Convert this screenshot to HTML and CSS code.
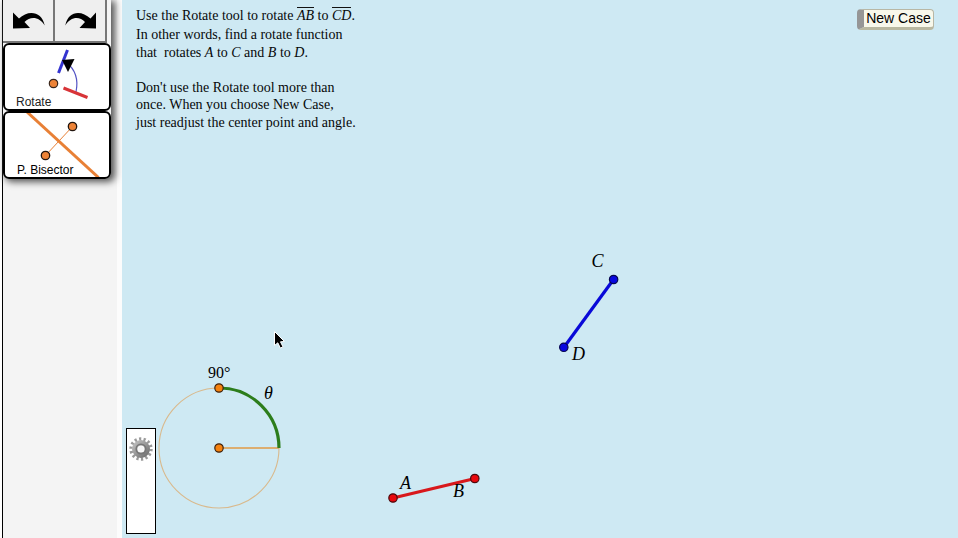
FILE: index.html
```html
<!DOCTYPE html>
<html lang="en">
<head>
<meta charset="utf-8">
<title>Rotate tool</title>
<link rel="stylesheet" href="styles.css">
</head>
<body>
<div class="app">
  <aside class="sidebar">
    <div class="tools">
      <div class="history">
        <button class="history-btn" aria-label="Undo">
          <svg width="50" height="41" viewBox="0 0 50 41"><path d="M10 12.500 L16 18.500 C25 9.500 39 11 41.700 25.500 C37 17.500 28 15.500 21.500 22 L27 28 L10 28.500Z"/></svg>
        </button>
        <button class="history-btn" aria-label="Redo">
          <svg width="50" height="41" viewBox="0 0 50 41"><path d="M41 12.500 L35.500 18.500 C26 9.500 13 11 10.300 25.500 C15 17.500 24 15.500 30 22 L24.500 28 L41 28.500Z"/></svg>
        </button>
      </div>
      <button class="tool">
        <svg class="tool-art" width="104" height="65" viewBox="5 45 104 65">
          <path d="M66 62 Q80 73 76 92" fill="none" stroke="#5656c5" stroke-width="1.200"/>
          <path d="M58.500 73 L67.500 50" stroke="#3434d0" stroke-width="3"/>
          <path d="M63.500 88 L87.500 97.500" stroke="#d83438" stroke-width="3"/>
          <path d="M62 60 L74.500 59 L68 72Z"/>
          <circle cx="53.500" cy="83.500" r="4.200" fill="#ed8337" stroke="#38251a" stroke-width="1.200"/>
        </svg>
        <span class="tool-label">Rotate</span>
      </button>
      <button class="tool tool-bisector">
        <svg class="tool-art" width="104" height="65" viewBox="5 113 104 65">
          <path d="M27 112 L98.500 177.500" stroke="#e88036" stroke-width="3"/>
          <path d="M45.500 155.500 L72.500 126.500" stroke="#e88036" stroke-width="1"/>
          <g fill="#ed8337" stroke="#21150e" stroke-width="1.300"><circle cx="45.500" cy="155.500" r="4.200"/><circle cx="72.500" cy="126.500" r="4.200"/></g>
        </svg>
        <span class="tool-label">P. Bisector</span>
      </button>
    </div>
  </aside>
  <main class="sketch">
    <div class="instructions">
      <p>Use the Rotate tool to rotate <i class="seg">AB</i> to <i class="seg">CD</i>.<br>In other words, find a rotate function<br>that&nbsp; rotates <i>A</i> to <i>C</i> and <i>B</i> to <i>D</i>.</p>
      <p class="second">Don't use the Rotate tool more than<br>once. When you choose New Case,<br>just readjust the center point and angle.</p>
    </div>
    <button class="new-case">New Case</button>
    <svg class="geometry" width="836" height="538" viewBox="122 0 836 538">
      <circle cx="219" cy="448" r="60" fill="none" stroke="#d9b98c" stroke-width="1.100"/>
      <path d="M219 448 H279" stroke="#dcae70" stroke-width="2"/>
      <path d="M219 388 A60 60 0 0 1 279 448" fill="none" stroke="#2c7d1b" stroke-width="3.200"/>
      <g fill="#f5820f" stroke="#3e210b" stroke-width="1.200"><circle cx="219" cy="388" r="4.200"/><circle cx="219" cy="448" r="4.200"/></g>
      <path d="M393 498 L475 478.500" stroke="#d8181c" stroke-width="3.200"/>
      <g fill="#e8080d" stroke="#4b080b" stroke-width="1.200"><circle cx="393" cy="498" r="4.200"/><circle cx="474.800" cy="478.500" r="4.200"/></g>
      <path d="M564 347.300 L613.500 279.500" stroke="#0909d8" stroke-width="3.200"/>
      <g fill="#0808df" stroke="#060650" stroke-width="1.200"><circle cx="563.800" cy="347.300" r="4.200"/><circle cx="613.600" cy="279.500" r="4.200"/></g>
      <text class="measure" x="208" y="378">90°</text>
      <g class="label">
        <text x="264" y="399">θ</text>
        <text x="400" y="488.500">A</text>
        <text x="453" y="497">B</text>
        <text x="591.500" y="267">C</text>
        <text x="572" y="360">D</text>
      </g>
      <path d="M274.500 331.500 L274.500 345.500 L277.800 342.800 L280.300 348 L283 346.900 L280.500 341.800 L284.500 341.500Z" stroke="#fff" stroke-width="1"/>
    </svg>
    <div class="options">
      <svg width="26" height="26" viewBox="-13 -13 26 26">
        <defs><linearGradient id="metal" x1="0" y1="0" x2="1" y2="1"><stop offset="0" stop-color="#bbb"/><stop offset="1" stop-color="#747474"/></linearGradient></defs>
        <circle r="10" fill="none" stroke="#9a9a9a" stroke-width="3.400" stroke-dasharray="2.200 2.288"/>
        <circle r="6.300" fill="none" stroke="url(#metal)" stroke-width="5.400"/>
        <circle r="4.800" fill="none" stroke="#777" stroke-width="1.500"/>
        <circle r="2.800" fill="#f6f6f6"/>
      </svg>
    </div>
  </main>
</div>
</body>
</html>
```
FILE: styles.css
```css
* { box-sizing: border-box; }
body { margin: 0; overflow: hidden; background: #fff; }
button { margin: 0; padding: 0; font-family: "Liberation Sans", sans-serif; color: #000; }
.app { display: flex; width: 958px; height: 538px; }
.sidebar {
  width: 120px;
  margin-left: 2px;
  border-left: 1px solid #000;
  border-right: 5px solid #fcfcfc;
  background: #f4f4f4;
}
.tools { width: 108px; height: 179px; box-shadow: 3px 2px 7px 1px #555; border-radius: 0 0 6px 6px; }
.history { display: flex; height: 43px; }
.history-btn {
  width: 52px;
  height: 43px;
  border: 0;
  border-right: 2px solid #777;
  border-bottom: 2px solid #777;
  background: #efefef;
}
.history-btn svg { display: block; }
.tool {
  position: relative;
  display: block;
  width: 108px;
  height: 68px;
  border: 2px solid #000;
  border-radius: 6px;
  background: #fff;
  overflow: hidden;
}
.tool-art { display: block; }
.tool-label { position: absolute; left: 11px; top: 50px; font-size: 12px; line-height: 14px; color: #222; white-space: nowrap; }
.tool-bisector .tool-label { left: 12px; color: #000; }
.sketch { position: relative; width: 836px; background: #cee9f3; }
.instructions { padding: 7px 0 0 14px; font: 14px/18.500px "Liberation Serif", serif; color: #060809; white-space: nowrap; }
.instructions p { margin: 0; }
.instructions .second { margin-top: 16.400px; line-height: 17.500px; }
.seg { border-top: 1px solid #111; }
.new-case {
  position: absolute;
  left: 735px;
  top: 9px;
  width: 77px;
  height: 21px;
  border: 1px solid #b8b7a5;
  border-left: 7px solid #969696;
  border-bottom: 3px solid #b9b8a1;
  border-radius: 4px;
  background: #f8f8eb;
  font-size: 14px;
  line-height: 17px;
  white-space: nowrap;
}
.geometry { position: absolute; left: 0; top: 0; }
.measure { font: 16px "Liberation Serif", serif; }
.label { font: italic 18px "Liberation Serif", serif; }
.options {
  position: absolute;
  left: 4px;
  top: 428px;
  width: 30px;
  height: 106px;
  padding: 7px 1px;
  border: 1px solid #000;
  background: #fff;
}
```
